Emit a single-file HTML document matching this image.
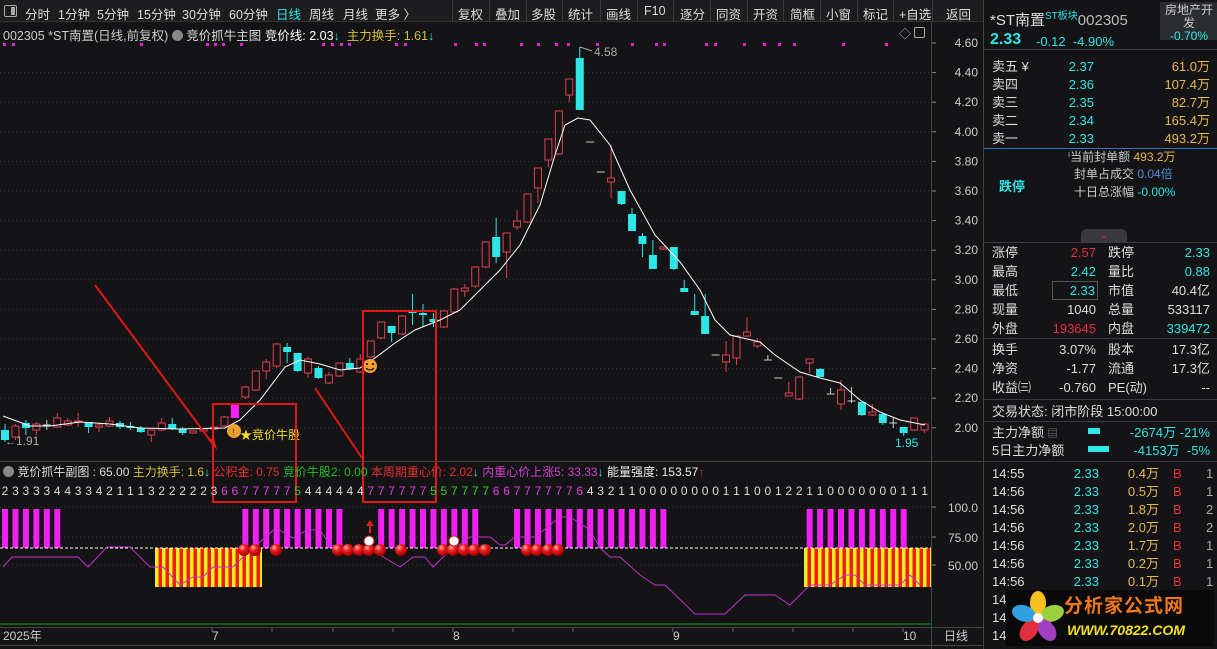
<!DOCTYPE html>
<html><head><meta charset="utf-8">
<style>
*{margin:0;padding:0;box-sizing:border-box}
body{width:1217px;height:649px;background:#141316;overflow:hidden;font-family:"Liberation Sans","Noto Sans CJK SC",sans-serif;color:#ccc;font-size:12px;position:relative}
.a{position:absolute;white-space:nowrap}
#tb{position:absolute;left:0;top:0;width:983px;height:22px;background:#1d1d20;border-bottom:1px solid #333}
#tb span{position:absolute;top:4px;font-size:12.5px;color:#ddd}
.sep{position:absolute;top:0;width:1px;height:22px;background:#3a3a3e}
#rp{position:absolute;left:983px;top:0;width:234px;height:649px;background:#141316;border-left:1px solid #444}
#rp div{line-height:17px}
.hr{position:absolute;left:0;width:234px;height:1px;background:#3c3c40}
.l{position:absolute;left:8px;font-size:13px;color:#ddd}
.cy{color:#2fe6e6}.rd{color:#e83040}.or{color:#e8b850}.wh{color:#ddd}
.rv{position:absolute;text-align:right;font-size:13px}
</style></head><body>
<div id="tb">
<div class="a" style="left:4px;top:5px;width:13px;height:12px;border:1px solid #aaa;border-radius:2px"><div style="position:absolute;right:1px;top:1px;width:4px;height:8px;background:#aaa"></div></div>
<span style="left:25px">分时</span><span style="left:58px">1分钟</span><span style="left:97px">5分钟</span><span style="left:137px">15分钟</span><span style="left:182px">30分钟</span><span style="left:229px">60分钟</span><span style="left:276px;color:#2fe6e6">日线</span><span style="left:309px">周线</span><span style="left:343px">月线</span><span style="left:375px">更多 〉</span>
<div class="sep" style="left:452px"></div><span style="left:458px">复权</span>
<div class="sep" style="left:489px"></div><span style="left:495px">叠加</span>
<div class="sep" style="left:526px"></div><span style="left:531px">多股</span>
<div class="sep" style="left:562px"></div><span style="left:568px">统计</span>
<div class="sep" style="left:600px"></div><span style="left:606px">画线</span>
<div class="sep" style="left:637px"></div><span style="left:644px">F10</span>
<div class="sep" style="left:673px"></div><span style="left:680px">逐分</span>
<div class="sep" style="left:710px"></div><span style="left:716px">同资</span>
<div class="sep" style="left:747px"></div><span style="left:753px">开资</span>
<div class="sep" style="left:783px"></div><span style="left:790px">简框</span>
<div class="sep" style="left:820px"></div><span style="left:826px">小窗</span>
<div class="sep" style="left:857px"></div><span style="left:863px">标记</span>
<div class="sep" style="left:893px"></div><span style="left:899px">+自选</span>
<div class="sep" style="left:932px"></div><span style="left:946px">返回</span>
</div>

<svg class="a" style="left:0;top:0" width="983" height="649" id="ch"></svg>

<div class="a" style="left:3px;top:25px;font-size:12.5px;color:#ccc">002305 *ST南置(日线,前复权) <span style="display:inline-block;width:11px;height:11px;border-radius:50%;background:#888;vertical-align:-1px"></span> <span class="wh">竞价抓牛主图</span> <span style="color:#fff">竞价线: 2.03</span><span class="cy">↓</span> &nbsp;<span style="color:#d4c03c">主力换手: 1.61</span><span class="cy">↓</span></div>
<div class="a" style="left:899px;top:25px;color:#aaa;font-size:12px">◇</div>
<div class="a" style="left:914px;top:27px;width:11px;height:11px;border:1px solid #aaa;border-radius:2px"></div>

<div class="a" style="left:3px;top:463px;font-size:12px;color:#ccc"><span style="display:inline-block;width:11px;height:11px;border-radius:50%;background:#888;vertical-align:-1px"></span> <span class="wh">竞价抓牛副图 : 65.00</span> <span style="color:#d4c03c">主力换手: 1.6</span><span class="cy">↓</span> <span style="color:#e83030">公积金: 0.75</span> <span style="color:#22c022">竞价牛股2: 0.00</span> <span style="color:#e83030">本周期重心价: 2.02</span><span class="cy">↓</span> <span style="color:#d040d0">内重心价上涨5: 33.33</span><span class="cy">↓</span> <span style="color:#eee">能量强度: 153.57</span><span style="color:#e03030">↑</span></div>

<div id="rp">
<div class="a" style="left:6px;top:8px;font-size:15px;color:#ddd">*ST南置<sup style="font-size:10px;color:#2fe6e6">ST板块</sup><span style="color:#bbb">002305</span></div>
<div class="a" style="left:176px;top:2px;width:58px;height:38px;background:#2a2c30;text-align:center;font-size:12px;color:#ccc;padding-top:2px;line-height:13px!important">房地产开<br>发<br><span class="cy">-0.70%</span></div>
<div class="a" style="left:6px;top:31px;font-size:16px;font-weight:bold" ><span class="cy">2.33</span></div>
<div class="a cy" style="left:52px;top:33px;font-size:13px">-0.12 &nbsp;-4.90%</div>
<div class="hr" style="top:49px"></div>
<div class="l" style="top:58px">卖五 ¥</div><div class="rv cy" style="left:70px;width:40px;top:58px">2.37</div><div class="rv or" style="left:150px;width:76px;top:58px">61.0万</div>
<div class="l" style="top:76px">卖四</div><div class="rv cy" style="left:70px;width:40px;top:76px">2.36</div><div class="rv or" style="left:150px;width:76px;top:76px">107.4万</div>
<div class="l" style="top:94px">卖三</div><div class="rv cy" style="left:70px;width:40px;top:94px">2.35</div><div class="rv or" style="left:150px;width:76px;top:94px">82.7万</div>
<div class="l" style="top:112px">卖二</div><div class="rv cy" style="left:70px;width:40px;top:112px">2.34</div><div class="rv or" style="left:150px;width:76px;top:112px">165.4万</div>
<div class="l" style="top:130px">卖一</div><div class="rv cy" style="left:70px;width:40px;top:130px">2.33</div><div class="rv or" style="left:150px;width:76px;top:130px">493.2万</div>
<div class="hr" style="top:148px;background:#3a70b0"></div>
<div class="a" style="left:84px;top:149px;font-size:12px;color:#ccc">ⁱ当前封单额 <span class="or">493.2万</span></div>
<div class="a" style="left:90px;top:166px;font-size:12px;color:#ccc">封单占成交 <span style="color:#4a90d9">0.04倍</span></div>
<div class="a" style="left:90px;top:184px;font-size:12px;color:#ccc">十日总涨幅 <span class="cy">-0.00%</span></div>
<div class="a cy" style="left:15px;top:178px;font-size:13px;font-weight:bold">跌停</div>
<div class="a" style="left:97px;top:229px;width:46px;height:13px;background:#3a3a3e;border-radius:6px 6px 0 0;text-align:center;color:#e03030;font-size:9px;line-height:13px!important">⌄</div>
<div class="hr" style="top:242px"></div>
<div class="l" style="top:244px">涨停</div><div class="rv rd" style="left:60px;width:52px;top:244px">2.57</div><div class="l" style="left:124px;top:244px">跌停</div><div class="rv cy" style="left:170px;width:56px;top:244px">2.33</div>
<div class="l" style="top:263px">最高</div><div class="rv cy" style="left:60px;width:52px;top:263px">2.42</div><div class="l" style="left:124px;top:263px">量比</div><div class="rv cy" style="left:170px;width:56px;top:263px">0.88</div>
<div class="l" style="top:282px">最低</div><div class="rv cy" style="left:68px;width:46px;top:281px;border:1px solid #555;padding-right:2px">2.33</div><div class="l" style="left:124px;top:282px">市值</div><div class="rv wh" style="left:170px;width:56px;top:282px">40.4亿</div>
<div class="l" style="top:301px">现量</div><div class="rv wh" style="left:60px;width:52px;top:301px">1040</div><div class="l" style="left:124px;top:301px">总量</div><div class="rv wh" style="left:170px;width:56px;top:301px">533117</div>
<div class="l" style="top:320px">外盘</div><div class="rv rd" style="left:60px;width:52px;top:320px">193645</div><div class="l" style="left:124px;top:320px">内盘</div><div class="rv cy" style="left:170px;width:56px;top:320px">339472</div>
<div class="hr" style="top:338px"></div>
<div class="l" style="top:341px">换手</div><div class="rv wh" style="left:60px;width:52px;top:341px">3.07%</div><div class="l" style="left:124px;top:341px">股本</div><div class="rv wh" style="left:170px;width:56px;top:341px">17.3亿</div>
<div class="l" style="top:360px">净资</div><div class="rv wh" style="left:60px;width:52px;top:360px">-1.77</div><div class="l" style="left:124px;top:360px">流通</div><div class="rv wh" style="left:170px;width:56px;top:360px">17.3亿</div>
<div class="l" style="top:379px">收益㈢</div><div class="rv wh" style="left:60px;width:52px;top:379px">-0.760</div><div class="l" style="left:124px;top:379px">PE(动)</div><div class="rv wh" style="left:170px;width:56px;top:379px">--</div>
<div class="hr" style="top:399px"></div>
<div class="l" style="top:403px">交易状态: 闭市阶段 15:00:00</div>
<div class="hr" style="top:421px"></div>
<div class="l" style="top:424px">主力净额 <span style="font-size:10px;color:#999">▤</span></div><div class="a" style="left:104px;top:428px;width:12px;height:6px;background:#2fe6e6"></div><div class="rv cy" style="left:120px;width:106px;top:424px">-2674万 -21%</div>
<div class="l" style="top:442px">5日主力净额</div><div class="a" style="left:104px;top:446px;width:21px;height:6px;background:#2fe6e6"></div><div class="rv cy" style="left:120px;width:106px;top:442px">-4153万 &nbsp;-5%</div>
<div class="hr" style="top:461px"></div>
<div id="trades"></div>
<div class="a" style="left:22px;top:590px;width:208px;height:56px;background:#0a0a0a"></div>
<svg class="a" style="left:24px;top:590px" width="60" height="56">
<g transform="translate(30,28)">
<ellipse cx="0" cy="-15" rx="8" ry="12" fill="#f5c020"/>
<ellipse cx="0" cy="-15" rx="8" ry="12" fill="#9ad040" transform="rotate(72)"/>
<ellipse cx="0" cy="-15" rx="8" ry="12" fill="#a040c0" transform="rotate(144)"/>
<ellipse cx="0" cy="-15" rx="8" ry="12" fill="#e03040" transform="rotate(216)"/>
<ellipse cx="0" cy="-15" rx="8" ry="12" fill="#30a0e0" transform="rotate(288)"/>
<circle r="5" fill="#fff"/></g></svg>
<div class="a" style="left:80px;top:596px;font-size:19px;font-weight:bold;color:#f07818;letter-spacing:1px;line-height:22px!important">分析家公式网</div>
<div class="a" style="left:83px;top:622px;font-size:14px;font-weight:bold;font-style:italic;color:#f0e020">WWW.70822.COM</div>
</div>

<script>
var svg=document.getElementById('ch'),h='';
function L(x1,y1,x2,y2,c,w,d){h+='<line x1="'+x1+'" y1="'+y1+'" x2="'+x2+'" y2="'+y2+'" stroke="'+c+'" stroke-width="'+(w||1)+'"'+(d?' stroke-dasharray="'+d+'"':'')+'/>';}
function R(x,y,w,hh,f,s){h+='<rect x="'+x+'" y="'+y+'" width="'+w+'" height="'+hh+'" fill="'+f+'"'+(s?' stroke="'+s+'"':'')+'/>';}
function T(x,y,t,c,sz,a){h+='<text x="'+x+'" y="'+y+'" fill="'+c+'" font-size="'+(sz||12)+'" font-family="Liberation Sans,Noto Sans CJK SC,sans-serif"'+(a?' text-anchor="'+a+'"':'')+'>'+t+'</text>';}
var pr=['4.60','4.40','4.20','4.00','3.80','3.60','3.40','3.20','3.00','2.80','2.60','2.40','2.20','2.00'];
for(var i=0;i<14;i++){var y=43+i*29.6;if(i>0)L(0,y,931,y,'#3a3a3e',1,'1 3');L(931,y,936,y,'#888');T(978,y+4,pr[i],'#ccc',12,'end');}
[3,12,140,206,214,222,240,322,331,340,348,395,404,454,475,483,520,537,555,567,596,631,655,663,705,714,743,763,778,793,842,885].forEach(function(x){R(x,43,3,3,'#e020e0');});
var C=[['c',430,440,424,442],['r',426,437,424,440],['c',423,428,420,435],['r',424,430,422,435],['w',425,425,420,430],['r',418,427,413,428],['r',421,425,418,426],['r',421,422,413,427],['c',422,427,422,433],['r',425,427,423,432],['r',421,426,417,427],['c',423,427,421,429],['c',426,428,422,430],['c',428,432,426,433],['r',430,435,430,442],['r',423,430,418,431],['c',424,429,418,430],['c',429,433,427,435],['r',431,433,431,434],['r',429,431,429,432],['r',427,429,427,430],['r',417,426,416,427],['m',403,418,403,418],['r',387,397,386,399],['r',371,390,370,391],['r',362,371,359,379],['r',344,366,343,368],['c',347,352,343,363],['c',353,371,353,372],['r',359,373,357,378],['c',368,378,366,379],['r',375,383,372,384],['r',363,376,363,377],['c',363,369,358,370],['r',359,372,354,373],['r',341,357,341,358],['r',322,338,322,339],['c',326,333,326,342],['r',316,334,315,335],['c',311,313,294,325],['c',313,315,304,327],['c',319,322,313,327],['r',311,327,310,328],['r',289,312,288,313],['r',288,291,284,297],['r',267,286,266,288],['r',242,267,241,268],['c',237,257,218,263],['r',233,252,233,278],['r',221,227,210,230],['r',194,222,194,223],['r',168,188,168,203],['r',139,160,139,167],['r',111,154,110,155],['r',79,95,79,102],['c',58,110,47,110],['w',142,142,142,142],['w',172,172,172,172],['r',178,182,145,198],['c',191,204,191,205],['c',214,231,208,231],['c',236,244,233,257],['c',255,269,240,269],['r',247,249,247,250],['c',247,269,247,270],['c',288,292,280,292],['c',311,315,294,315],['c',316,334,294,334],['w',355,355,355,355],['r',355,362,341,372],['r',336,358,336,365],['r',332,336,317,337],['r',342,346,338,348],['w',360,360,355,360],['w',378,378,378,378],['r',393,396,382,396],['r',377,399,377,400],['r',359,363,359,373],['c',369,377,368,377],['w',394,394,388,394],['r',390,404,380,410],['w',401,401,387,403],['c',402,415,402,416],['r',412,415,404,416],['c',414,423,413,425],['w',423,423,418,428],['c',427,433,427,436],['r',418,430,418,431],['r',424,430,423,433]];
for(var i=0;i<C.length;i++){var c=C[i],x=5+i*10.45,col=c[0]=='c'?'#2fe6e6':c[0]=='m'?'#ff20ff':c[0]=='w'?'#ccc':'#e04050';
 L(x,c[3],x,c[4],col);
 if(c[0]=='w'){L(x-4,c[1],x+4,c[1],col);}
 else if(c[0]=='r'){h+='<rect x="'+(x-3.5)+'" y="'+c[1]+'" width="7" height="'+Math.max(1,c[2]-c[1])+'" fill="#141316" stroke="'+col+'"/>';}
 else R(x-4,c[1],8,Math.max(2,c[2]-c[1]),col);}
h+='<polyline fill="none" stroke="#fff" stroke-width="1" points="3,416 30,426 50,426 80,422 110,424 140,428 180,429 225,428 240,420 260,400 285,367 300,360 320,364 340,370 360,368 375,358 395,343 415,330 440,320 460,310 480,290 500,270 520,245 540,205 555,155 565,125 578,118 590,120 610,145 630,190 655,235 680,262 700,290 715,320 730,335 760,342 775,355 800,372 820,378 840,383 860,400 880,412 900,420 925,425"/>';
T(16,445,'1.91','#aaa',12);T(5,445,'←','#aaa',11);
T(895,447,'1.95','#2fe6e6',12);T(594,56,'4.58','#aaa',12);L(580,47,592,51,'#aaa');
h+='<circle cx="234" cy="431" r="7" fill="#e8a030"/><text x="232" y="435" font-size="9" fill="#630">!</text>';
T(240,439,'★竞价牛股','#f0e020',12);
h+='<circle cx="370" cy="366" r="7" fill="#f0a030"/><circle cx="367" cy="364" r="1" fill="#000"/><circle cx="373" cy="364" r="1" fill="#000"/><path d="M366 368 Q370 372 374 368" stroke="#000" fill="none"/>';
L(95,285,215,447,'#e01818',2);L(315,388,362,458,'#e01818',2);
h+='<path d="M217 450 L208 440 L214 438 Z" fill="#e01818"/>';
h+='<rect x="213" y="404" width="83" height="98" fill="none" stroke="#e01818" stroke-width="2"/>';
h+='<rect x="363" y="311" width="73" height="191" fill="none" stroke="#e01818" stroke-width="2"/>';
[[507,'100.0'],[537,'75.00'],[565,'50.00']].forEach(function(a){L(0,a[0],931,a[0],'#3a3a3e',1,'1 3');L(931,a[0],936,a[0],'#888');T(978,a[0]+5,a[1],'#ccc',12,'end');});
function stripes(x1,x2){for(var x=x1;x<x2;x+=7){R(x,548,Math.min(3.5,x2-x),39,'#f0f020');if(x+3.5<x2)R(x+3.5,548,Math.min(3.5,x2-x-3.5),39,'#f02010');}}
stripes(155,262);stripes(804,931);
function bars(a,b){for(var i=a;i<=b;i++)R(5+i*10.45-3,509,6,39,'#f020f0');}
bars(0,5);bars(23,32);bars(36,45);bars(49,63);bars(77,86);
L(0,548,931,548,'#fff',1,'3 2');
h+='<polyline fill="none" stroke="#c030d0" points="3,567 12,557 78,557 88,567 107,547 130,547 150,567 163,567 180,585 193,577 203,577 213,567 233,567 245,555 276,528 293,538 307,530 320,530 330,545 345,548 370,548 385,558 400,567 413,557 425,557 433,567 443,557 470,537 490,537 500,545 505,545 515,537 535,537 560,517 570,517 590,530 600,548 610,557 620,557 640,575 655,585 665,585 695,614 725,614 745,595 775,595 790,605 810,585 830,585 845,575 855,575 865,585 900,585 910,575 920,585"/>';
h+='<defs><radialGradient id="g" cx="0.35" cy="0.3" r="0.7"><stop offset="0" stop-color="#ffb0b0"/><stop offset="0.4" stop-color="#f02020"/><stop offset="1" stop-color="#900"/></radialGradient></defs>';
[244,255,276,338,348,359,369,380,401,443,453,464,474,485,527,537,548,558].forEach(function(x){h+='<circle cx="'+x+'" cy="550" r="6" fill="url(#g)"/>';});
h+='<circle cx="369" cy="541" r="5" fill="#fff" stroke="#d02020"/><circle cx="454" cy="541" r="5" fill="#fff" stroke="#d02020"/>';
L(370,533,370,524,'#e02020',2);h+='<path d="M366 526 L370 520 L374 526Z" fill="#e02020"/>';
L(0,624,931,624,'#20a020');
var D='233334433421113222223'+'6677777'+'5'+'444444'+'777777'+'5'+'57777'+'66'+'777777'+'6'+'432110000000011100122110000000111';
for(var i=0;i<D.length&&i<89;i++){var col='#ddd';if(i>=21&&i<=27||i>=35&&i<=40||i>=47&&i<=55)col='#e040e0';if(i==28||i>=41&&i<=46)col='#30d030';T(5+i*10.45,495,D[i],col,12,'middle');}
T(3,640,'2025年','#ccc',12);T(212,640,'7','#ccc',12);T(453,640,'8','#ccc',12);T(673,640,'9','#ccc',12);T(903,640,'10','#ccc',12);T(944,640,'日线','#ccc',12);
[212,272,333,393,453,513,573,673,733,793,853,903].forEach(function(x){L(x,628,x,632,'#666');});
L(931.5,22,931.5,649,'#444');L(0,461.5,983,461.5,'#444');L(0,627.5,983,627.5,'#444');L(0,645.5,983,645.5,'#444');
svg.innerHTML=h;
var tv=['0.4万','0.5万','1.8万','2.0万','1.7万','0.2万','0.1万'],tn=['1','1','2','2','1','1','1'],th='';
for(var i=0;i<10;i++){var y=465+i*18;th+='<div class="l" style="top:'+y+'px">'+(i==0?'14:55':'14:56')+'</div>';if(i<7)th+='<div class="rv cy" style="left:70px;width:45px;top:'+y+'px">2.33</div><div class="rv or" style="left:120px;width:55px;top:'+y+'px">'+tv[i]+'</div><div class="a rd" style="left:189px;top:'+y+'px;font-size:13px">B</div><div class="a" style="left:222px;top:'+y+'px;font-size:13px;color:#aaa">'+tn[i]+'</div>';}
document.getElementById('trades').innerHTML=th;
</script>
</body></html>
